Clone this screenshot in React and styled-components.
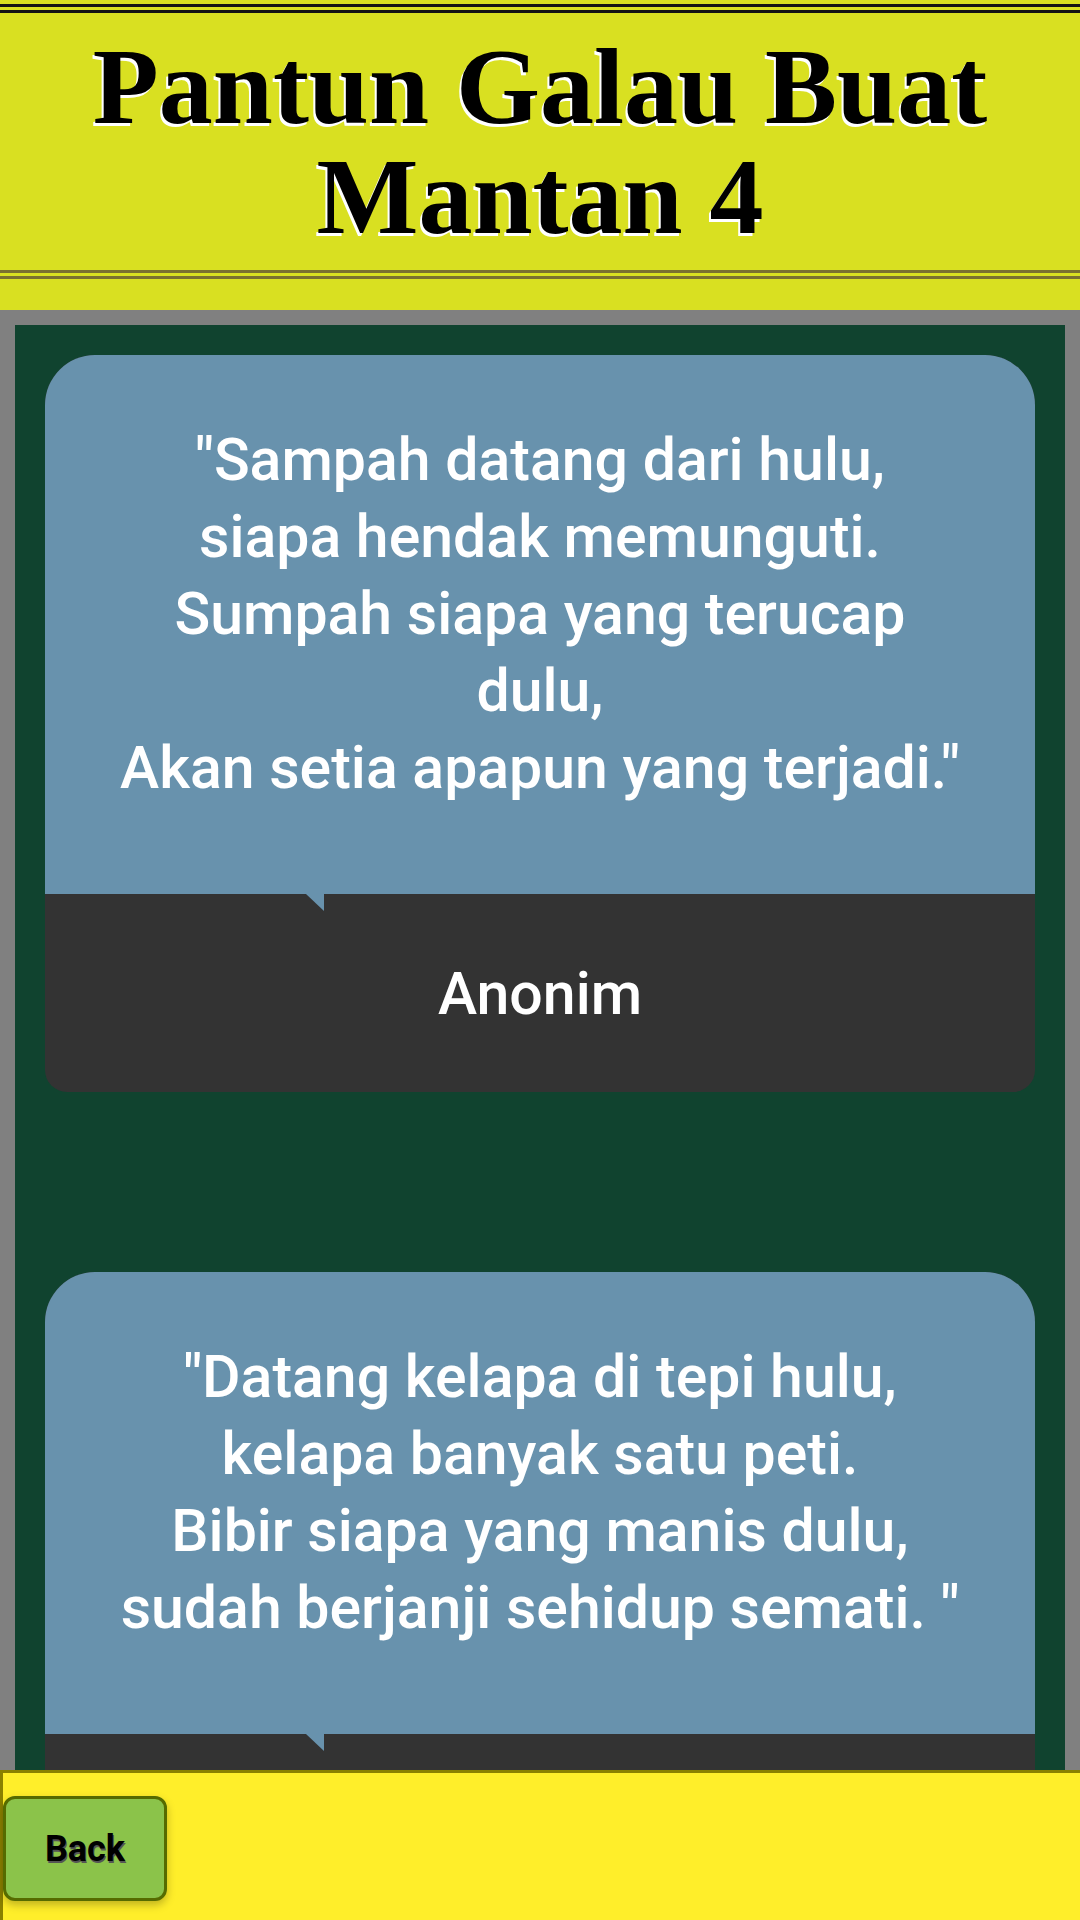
import React from "react";
import styled, { createGlobalStyle } from "styled-components";

const pantun = [
  {
    text: `"Sampah datang dari hulu,\nsiapa hendak memunguti. \nSumpah siapa yang terucap dulu,\nAkan setia apapun yang terjadi."`,
    author: "Anonim",
  },
  {
    text: `"Datang kelapa di tepi hulu,\nkelapa banyak satu peti. \nBibir siapa yang manis dulu,\nsudah berjanji sehidup semati. "`,
    author: "Anonim",
  },
];

function App() {
  return (
    <Page>
      <GlobalStyle />
      <Header>
        <Banner>
          <Title>
            Pantun Galau Buat
            <br />
            Mantan 4
          </Title>
        </Banner>
      </Header>

      <Body>
        <Panel>
          {pantun.map((p, i) => (
            <Card key={i}>
              <Quote>{p.text}</Quote>
              <Author>{p.author}</Author>
            </Card>
          ))}
        </Panel>
      </Body>

      <Footer>
        <BackButton>Back</BackButton>
      </Footer>
    </Page>
  );
}

const GlobalStyle = createGlobalStyle`
  html, body {
    margin: 0;
    padding: 0;
  }
  body {
    font-family: Roboto, "Liberation Sans", sans-serif;
  }
  * {
    box-sizing: border-box;
  }
`;

const Page = styled.div`
  width: 1080px;
  height: 1920px;
  display: flex;
  flex-direction: column;
  overflow: hidden;
`;

const Header = styled.header`
  flex: none;
  height: 310px;
  padding: 4px 0 31px;
  background-color: #d9e021;
`;

const Banner = styled.div`
  height: 275px;
  border-top: 9px double #141414;
  border-bottom: 9px double #7a7030;
  display: flex;
  align-items: center;
  justify-content: center;
`;

const Title = styled.h1`
  margin: 0;
  font-family: "Liberation Serif", serif;
  font-weight: bold;
  font-size: 108px;
  line-height: 110px;
  text-align: center;
  color: #000;
  text-shadow: -2px 3px 0 #ffffff;
`;

const Body = styled.main`
  flex: 1;
  min-height: 0;
  display: flex;
  padding: 15px 15px 0;
  background-color: #808080;
`;

const Panel = styled.div`
  flex: 1;
  display: flex;
  flex-direction: column;
  gap: 180px;
  padding: 30px;
  overflow: hidden;
  background-color: #10432f;
`;

const Card = styled.div`
  flex: none;
  display: flex;
  flex-direction: column;
  border-radius: 50px 50px 22px 22px;
  overflow: hidden;
  background-color: #333333;
`;

const Quote = styled.p`
  position: relative;
  margin: 0;
  padding: 66px 66px 88px;
  background-color: #6892ad;
  color: #ffffff;
  font-size: 59px;
  font-weight: 500;
  line-height: 77px;
  text-align: center;
  white-space: pre-line;

  &::after {
    content: "";
    position: absolute;
    left: 261px;
    bottom: -17px;
    width: 0;
    height: 0;
    border-top: 17px solid #6892ad;
    border-left: 18px solid transparent;
  }
`;

const Author = styled.div`
  padding: 61px 20px 60px;
  color: #ffffff;
  font-size: 59px;
  font-weight: 500;
  line-height: 77px;
  text-align: center;
`;

const Footer = styled.footer`
  flex: none;
  height: 150px;
  display: flex;
  align-items: center;
  border-top: 3px solid #8a8000;
  border-left: 3px solid #8a8000;
  background-color: #ffee2a;
`;

const BackButton = styled.button`
  width: 164px;
  height: 105px;
  margin-top: 4px;
  border: 3px solid #566b00;
  border-radius: 12px;
  background-color: #8bc34a;
  box-shadow: 0 4px 8px rgba(0, 0, 0, 0.25);
  font-family: Roboto, "Liberation Sans", sans-serif;
  font-weight: bold;
  font-size: 36px;
  color: #000000;
  text-shadow: 1px 2px 0 #555555;
  cursor: pointer;
`;

export default App;
